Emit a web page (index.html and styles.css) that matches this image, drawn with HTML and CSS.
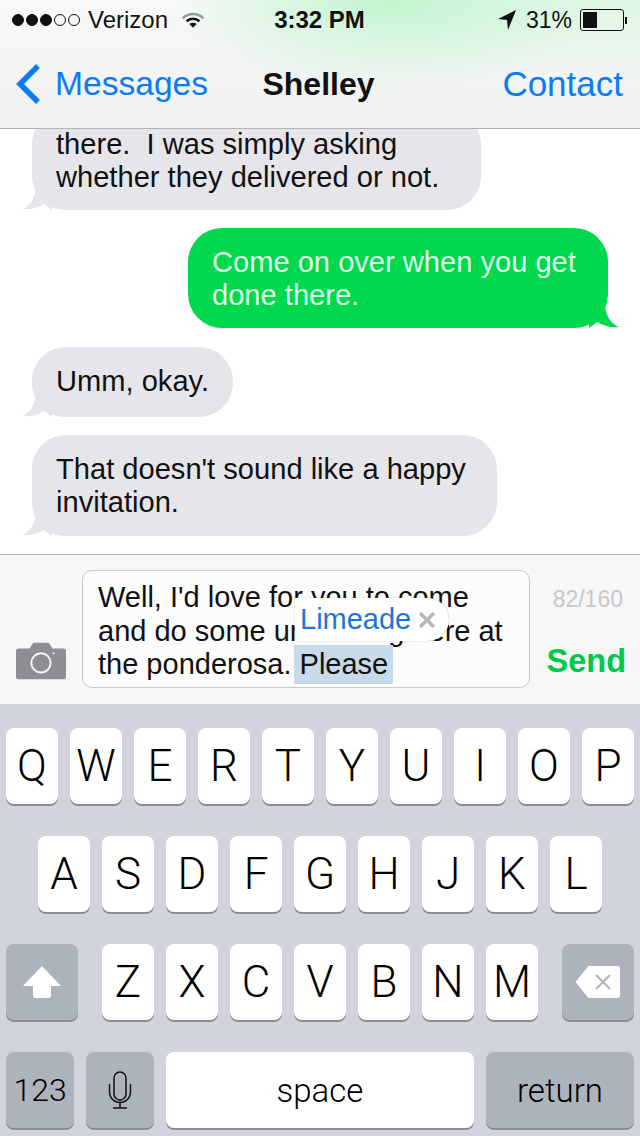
FILE: index.html
```html
<!DOCTYPE html>
<html lang="en">
<head>
  <meta charset="UTF-8" />
  <title>Shelley</title>
  <link rel="stylesheet" href="styles.css">
</head>
<body>
  <div class="phone">
    <header class="top">
      <div class="status">
        <div class="status-left">
          <span class="dots"><i class="dot on"></i><i class="dot on"></i><i class="dot on"></i><i class="dot"></i><i class="dot"></i></span>
          <span class="carrier">Verizon</span>
          <svg class="wifi" width="24" height="18" viewBox="0 0 28 20">
            <path d="M2 8 A17 17 0 0 1 26 8" fill="none" stroke="#8fa08f" stroke-width="3"/>
            <path d="M6.500 11.500 A11 11 0 0 1 21.500 11.500" fill="none" stroke="#111" stroke-width="3"/>
            <path d="M14 19 L9.800 14.800 A6 6 0 0 1 18.200 14.800 Z" fill="#111"/>
          </svg>
        </div>
        <div class="time">3:32 PM</div>
        <div class="status-right">
          <svg class="arrow" width="20" height="22" viewBox="0 0 20 22"><path d="M19 1 L1 10 L10 11 L11 21 Z" fill="#111"/></svg>
          <span class="percent">31%</span>
          <span class="battery"><span class="charge"></span></span>
          <span class="nub"></span>
        </div>
      </div>
      <nav class="nav">
        <a class="back">
          <svg width="28" height="42" viewBox="0 0 28 42"><path d="M24 3 L6 21 L24 39" fill="none" stroke="#0a7cf6" stroke-width="5.500"/></svg>
          Messages
        </a>
        <div class="title">Shelley</div>
        <a class="contact">Contact</a>
      </nav>
    </header>

    <main class="chat">
      <div class="bubble them msg-first">there.&nbsp; I was simply asking<br>whether they delivered or not.
        <svg class="tail" width="30" height="22" viewBox="0 0 30 22"><path d="M14 0 C13 10 8 18 0 21 C8 22 15 20 22 16 L30 22 L30 0 Z" fill="#e5e5ea"/></svg>
      </div>
      <div class="bubble me">Come on over when you get<br>done there.
        <svg class="tail" width="30" height="22" viewBox="0 0 30 22"><path d="M16 0 C17 10 22 18 30 21 C22 22 15 20 8 16 L0 22 L0 0 Z" fill="#00d84e"/></svg>
      </div>
      <div class="bubble them single">Umm, okay.
        <svg class="tail" width="30" height="22" viewBox="0 0 30 22"><path d="M14 0 C13 10 8 18 0 21 C8 22 15 20 22 16 L30 22 L30 0 Z" fill="#e5e5ea"/></svg>
      </div>
      <div class="bubble them msg-last">That doesn't sound like a happy<br>invitation.
        <svg class="tail" width="30" height="22" viewBox="0 0 30 22"><path d="M14 0 C13 10 8 18 0 21 C8 22 15 20 22 16 L30 22 L30 0 Z" fill="#e5e5ea"/></svg>
      </div>
    </main>

    <section class="composer">
      <svg class="camera" width="50" height="38" viewBox="0 0 52 38">
        <path d="M3 6 H14 L18 0 H34 L38 6 H49 Q52 6 52 9 V35 Q52 38 49 38 H3 Q0 38 0 35 V9 Q0 6 3 6 Z" fill="#8e8e93"/>
        <circle cx="26" cy="21" r="10" fill="none" stroke="#f4f4f4" stroke-width="2"/>
        <circle cx="39" cy="11" r="1" fill="#f4f4f4"/>
      </svg>
      <div class="input">
        Well, I'd love for you to come<br>and do some unwinding here at<br>the ponderosa. <span class="picked">Please</span>
        <div class="suggest"><span>Limeade</span><svg width="18" height="18" viewBox="0 0 18 18"><path d="M2 2 L16 16 M16 2 L2 16" stroke="#b9b9bd" stroke-width="3.500"/></svg></div>
      </div>
      <div class="side">
        <div class="count">82/160</div>
        <div class="send">Send</div>
      </div>
    </section>

    <section class="keyboard">
      <div class="row">
        <div class="key">Q</div><div class="key">W</div><div class="key">E</div><div class="key">R</div><div class="key">T</div><div class="key">Y</div><div class="key">U</div><div class="key">I</div><div class="key">O</div><div class="key">P</div>
      </div>
      <div class="row">
        <div class="key">A</div><div class="key">S</div><div class="key">D</div><div class="key">F</div><div class="key">G</div><div class="key">H</div><div class="key">J</div><div class="key">K</div><div class="key">L</div>
      </div>
      <div class="row row-split">
        <div class="key fn wide">
          <svg width="38" height="32" viewBox="0 0 38 32"><path d="M19 0 L38 20 H28 V29 Q28 32 25 32 H13 Q10 32 10 29 V20 H0 Z" fill="#fff"/></svg>
        </div>
        <div class="letters">
          <div class="key">Z</div><div class="key">X</div><div class="key">C</div><div class="key">V</div><div class="key">B</div><div class="key">N</div><div class="key">M</div>
        </div>
        <div class="key fn wide">
          <svg width="44" height="32" viewBox="0 0 44 32">
            <path d="M13 0 H40 Q44 0 44 4 V28 Q44 32 40 32 H13 L0 16 Z" fill="#fff" stroke="#fff" stroke-linejoin="round"/>
            <path d="M20 9 L34 23 M34 9 L20 23" stroke="#acb3bd" stroke-width="2"/>
          </svg>
        </div>
      </div>
      <div class="row bottom">
        <div class="key fn num">123</div>
        <div class="key fn mic">
          <svg width="24" height="38" viewBox="0 0 24 38" fill="none" stroke="#111" stroke-width="1.500">
            <rect x="6" y="1" width="12" height="28" rx="6"/>
            <path d="M1.500 13 V21 A10.500 10.500 0 0 0 22.500 21 V13 M12 31 V37 M5 37 H19"/>
          </svg>
        </div>
        <div class="key space">space</div>
        <div class="key fn return">return</div>
      </div>
    </section>
  </div>
</body>
</html>
```

FILE: styles.css
```css
* {
  box-sizing: border-box;
}
body {
  margin: 0;
  font-family: 'Liberation Sans', Arial, sans-serif;
  color: #111;
  background: #fff;
}
.phone {
  width: 640px;
  height: 1136px;
  display: flex;
  flex-direction: column;
  overflow: hidden;
}

/* status bar and nav */
.top {
  height: 129px;
  flex: none;
  border-bottom: 1px solid #b2b2b2;
  background:
    radial-gradient(ellipse 220px 90px at 390px 0, rgba(190,245,205,0.95), rgba(190,245,205,0) 100%),
    radial-gradient(ellipse 320px 85px at 640px 0, rgba(215,245,220,0.8), rgba(215,245,220,0) 100%),
    linear-gradient(#f8f8f8, #f0f1f1);
}
.status {
  height: 40px;
  padding: 0 13px 0 12px;
  display: grid;
  grid-template-columns: 1fr auto 1fr;
  align-items: center;
  font-size: 24px;
}
.status-left {
  display: flex;
  align-items: center;
}
.dots {
  display: flex;
  gap: 2px;
}
.dot {
  width: 12px;
  height: 12px;
  border: 1px solid #111;
  border-radius: 50%;
}
.dot.on {
  background: #111;
}
.carrier {
  margin-left: 8px;
}
.wifi {
  margin-left: 13px;
}
.time {
  font-weight: bold;
}
.status-right {
  display: flex;
  align-items: center;
  justify-content: flex-end;
}
.arrow {
  margin-right: 9px;
}
.percent {
  margin-right: 8px;
  font-size: 23px;
}
.battery {
  width: 44px;
  height: 22px;
  padding: 2px;
  border: 1px solid #111;
  border-radius: 3px;
}
.charge {
  display: block;
  width: 14px;
  height: 16px;
  background: #111;
}
.nub {
  width: 2px;
  height: 7px;
  margin-left: 1px;
  background: #111;
}
.nav {
  height: 88px;
  padding: 0 17px 0 14px;
  display: grid;
  grid-template-columns: 1fr auto 1fr;
  align-items: center;
  font-size: 34px;
}
.back {
  display: flex;
  align-items: center;
  gap: 13px;
  font-size: 33.600px;
  color: #0a7cf6;
}
.title {
  font-size: 32px;
  font-weight: bold;
}
.contact {
  text-align: right;
  font-size: 35px;
  color: #0a7cf6;
}

/* messages */
.chat {
  height: 425px;
  flex: none;
  padding-bottom: 18px;
  display: flex;
  flex-direction: column;
  justify-content: flex-end;
  gap: 18px;
  overflow: hidden;
}
.bubble {
  position: relative;
  flex: none;
  padding: 18px 24px 16px;
  border-radius: 34px;
  font-size: 29.100px;
  line-height: 33px;
  white-space: nowrap;
}
.them {
  align-self: flex-start;
  margin-left: 32px;
  background: #e5e5ea;
}
.me {
  align-self: flex-end;
  width: 420px;
  margin-right: 32px;
  margin-bottom: 1px;
  color: #dffbe8;
  background: #00d84e;
}
.msg-first {
  width: 449px;
}
.msg-last {
  width: 465px;
  padding-bottom: 17px;
}
.single {
  width: 201px;
  padding-top: 18px;
  padding-bottom: 19px;
}
.tail {
  position: absolute;
  bottom: 0;
}
.them .tail {
  left: -10px;
}
.me .tail {
  right: -11px;
}

/* text box row */
.composer {
  height: 150px;
  flex: none;
  padding: 15px 14px 16px 16px;
  display: flex;
  align-items: flex-end;
  border-top: 1px solid #b2b2b2;
  background: #f7f7f8;
}
.camera {
  flex: none;
  margin-bottom: 8px;
}
.input {
  position: relative;
  width: 448px;
  height: 118px;
  margin-left: 16px;
  padding: 10px 15px;
  border: 1px solid #c8c8cc;
  border-radius: 10px;
  background: #fcfcfc;
  font-size: 29px;
  line-height: 33.500px;
  white-space: nowrap;
}
.picked {
  padding: 3px 5px 4px 6px;
  margin-left: -6px;
  background: #c8d9ea;
}
.suggest {
  position: absolute;
  left: 212px;
  top: 27px;
  width: 154px;
  height: 43px;
  padding-left: 5px;
  display: flex;
  align-items: center;
  gap: 7px;
  border-radius: 0 22px 22px 0;
  background: #fff;
  box-shadow: 0 0 1px #888;
  font-size: 29px;
  color: #1b75d8;
}
.side {
  flex: 1;
  height: 100%;
  display: flex;
  flex-direction: column;
  justify-content: space-between;
  align-items: flex-end;
}
.count {
  margin-top: 16px;
  margin-right: 3px;
  font-size: 23px;
  color: #c7c7cc;
}
.send {
  font-size: 32.500px;
  font-weight: bold;
  color: #00c84b;
  margin-bottom: 8px;
}

/* keyboard */
.keyboard {
  flex: 1;
  padding: 24px 6px 8px;
  display: flex;
  flex-direction: column;
  gap: 32px;
  background: #d1d5db;
}
.row {
  display: flex;
  justify-content: center;
  gap: 12px;
}
.row-split {
  justify-content: space-between;
}
.letters {
  display: flex;
  gap: 12px;
}
.key {
  width: 52px;
  height: 76px;
  display: flex;
  align-items: center;
  justify-content: center;
  border-radius: 8px;
  background: #fff;
  box-shadow: 0 2px 0 #8b8e93;
  font-family: Roboto, 'Liberation Sans', sans-serif;
  font-weight: 300;
  font-size: 44px;
  color: #000;
}
.fn {
  background: #acb3bd;
}
.wide {
  width: 72px;
}
.num {
  width: 68px;
  font-size: 32px;
}
.mic {
  width: 68px;
}
.space {
  width: 308px;
  font-size: 33px;
}
.return {
  width: 148px;
  font-size: 33px;
}
```
